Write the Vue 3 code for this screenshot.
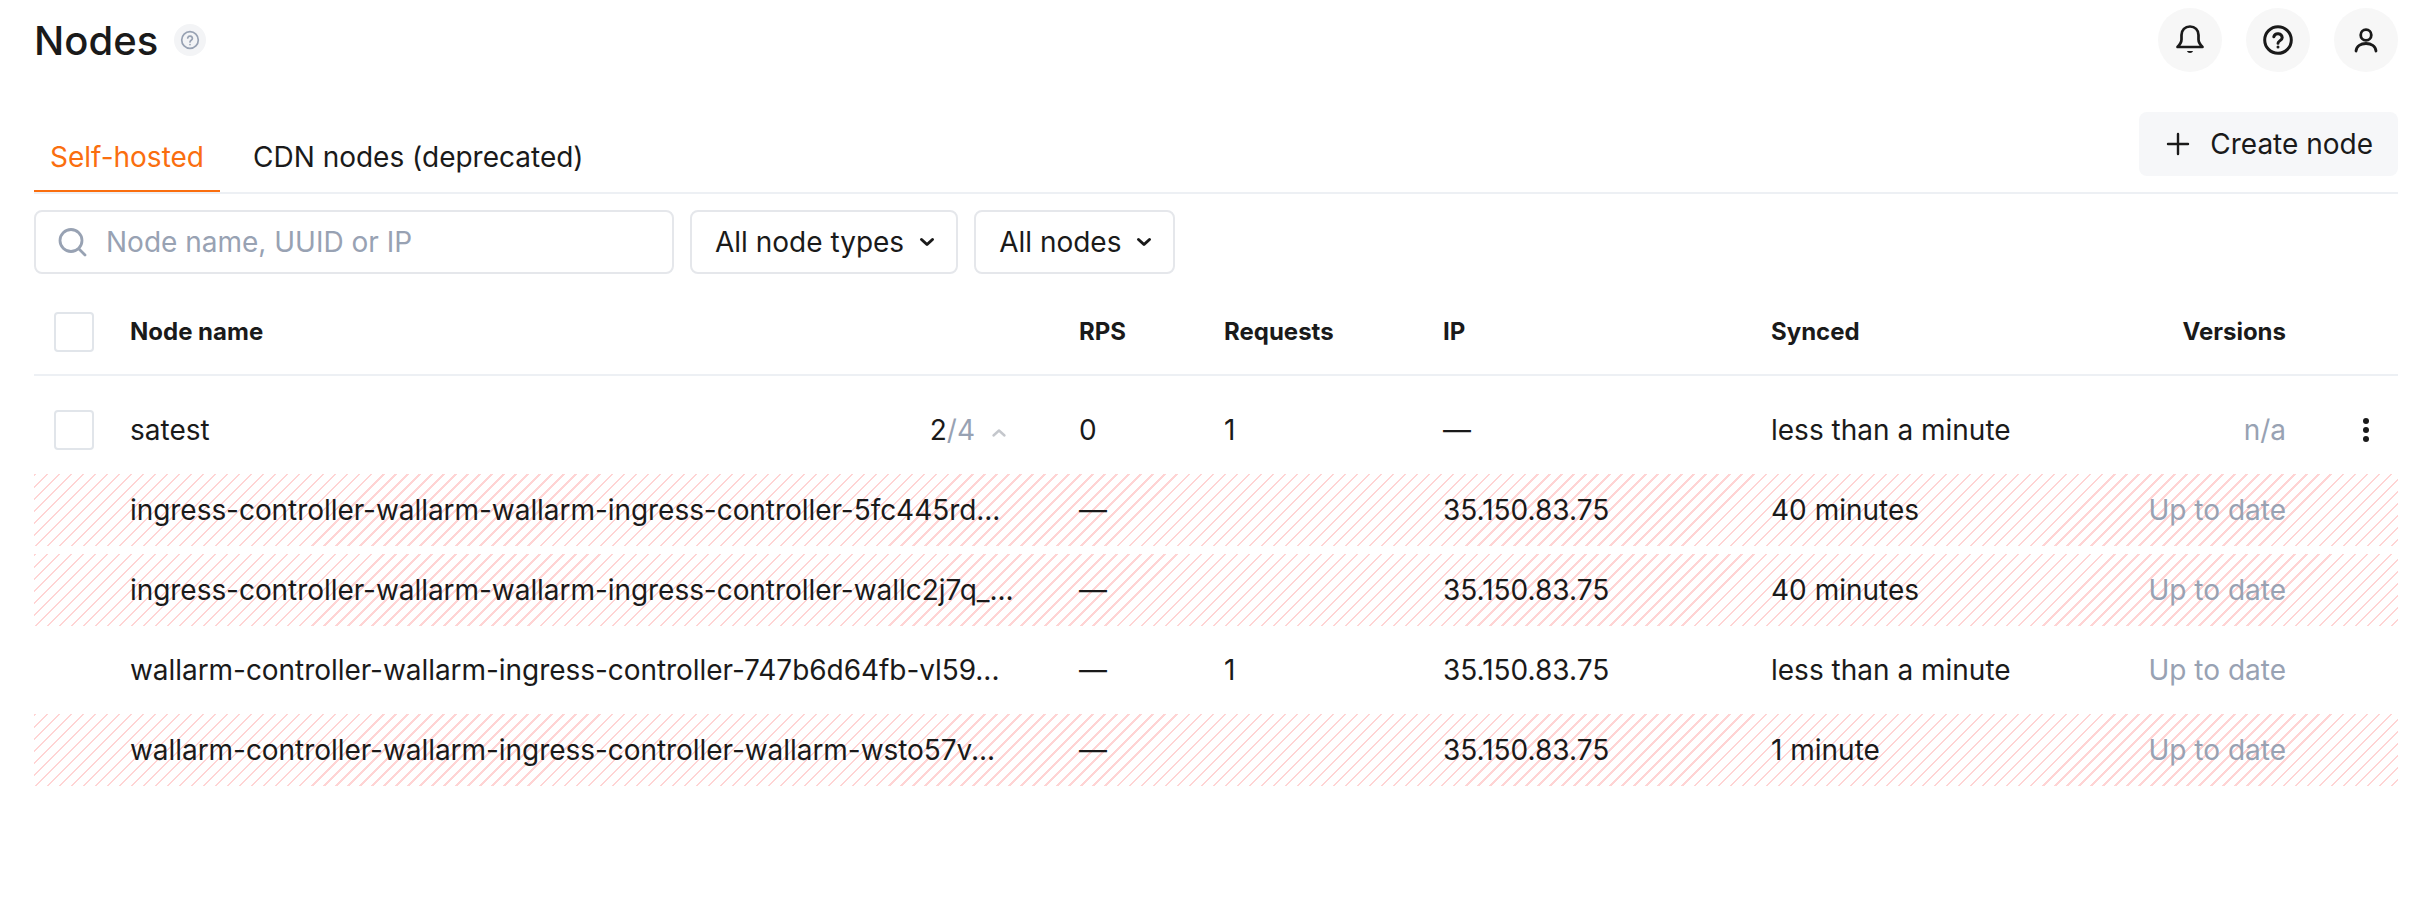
<template>
  <div class="page">
    <header class="top">
      <div class="title">
        <h1>Nodes</h1>
        <span class="hint">
          <svg width="20" height="20" viewBox="0 0 20 20" fill="none" stroke="#98a2b3" stroke-width="1.7" stroke-linecap="round">
            <circle cx="10" cy="10" r="8.3" />
            <path d="M7.700 7.900a2.400 2.400 0 0 1 4.700.6c0 1.600-2.400 1.800-2.400 3.400" />
            <path d="M10 14.500v.1" />
          </svg>
        </span>
      </div>
      <div class="top-icons">
        <button class="round">
          <svg width="32" height="32" viewBox="0 0 32 32" fill="none" stroke="#1a1a1a" stroke-width="2.700" stroke-linecap="round" stroke-linejoin="round">
            <path d="M3.500 23h25c-2.500-2.500-4-4-4-7.500v-4.500C24.500 6 21 2.500 16 2.500S7.500 6 7.500 11v4.500c0 3.500-1.500 5-4 7.500z" />
            <path d="M13 27h6c-.5 2.500-5.500 2.500-6 0z" fill="#1a1a1a" stroke="none" />
          </svg>
        </button>
        <button class="round">
          <svg width="32" height="32" viewBox="0 0 32 32" fill="none" stroke="#1a1a1a" stroke-width="3" stroke-linecap="round">
            <circle cx="16" cy="16" r="13.300" />
            <path d="M11.800 12.700a4.300 4.300 0 0 1 8.400 1c0 2.800-4.200 3-4.200 5.600" />
            <path d="M16 23v.1" />
          </svg>
        </button>
        <button class="round">
          <svg width="32" height="32" viewBox="0 0 32 32" fill="none" stroke="#1a1a1a" stroke-width="2.800" stroke-linecap="round">
            <circle cx="16" cy="11" r="5.300" />
            <path d="M6 27c.6-5 4.800-7.500 10-7.500S25.400 22 26 27" />
          </svg>
        </button>
      </div>
    </header>

    <div class="tabs-row">
      <nav class="tabs">
        <a class="tab active">Self-hosted</a>
        <a class="tab">CDN nodes (deprecated)</a>
      </nav>
      <button class="create">
        <svg width="24" height="24" viewBox="0 0 24 24" fill="none" stroke="#1a1a1a" stroke-width="2.400" stroke-linecap="round">
          <path d="M12 2v20M2 12h20" />
        </svg>
        Create node
      </button>
    </div>

    <div class="filters">
      <div class="search">
        <svg width="32" height="32" viewBox="0 0 32 32" fill="none" stroke="#98a2b3" stroke-width="2.800" stroke-linecap="round">
          <circle cx="15" cy="14.500" r="11" />
          <path d="M23 23l6 6" />
        </svg>
        <span>Node name, UUID or IP</span>
      </div>
      <button class="select">
        All node types
        <svg width="16" height="10" viewBox="0 0 16 10" fill="none" stroke="#1a1a1a" stroke-width="3" stroke-linecap="round" stroke-linejoin="round">
          <path d="M2.500 2.500L8 7.500l5.500-5" />
        </svg>
      </button>
      <button class="select">
        All nodes
        <svg width="16" height="10" viewBox="0 0 16 10" fill="none" stroke="#1a1a1a" stroke-width="3" stroke-linecap="round" stroke-linejoin="round">
          <path d="M2.500 2.500L8 7.500l5.500-5" />
        </svg>
      </button>
    </div>

    <div class="row head">
      <div class="c-check"><span class="box"></span></div>
      <div class="c-name">Node name</div>
      <div class="c-rps">RPS</div>
      <div class="c-req">Requests</div>
      <div class="c-ip">IP</div>
      <div class="c-sync">Synced</div>
      <div class="c-ver">Versions</div>
      <div class="c-menu"></div>
    </div>

    <div class="row parent">
      <div class="c-check"><span class="box"></span></div>
      <div class="c-name split">
        <span>satest</span>
        <span class="count">2<em>/4</em>
          <svg width="16" height="10" viewBox="0 0 16 10" fill="none" stroke="#c4c7cc" stroke-width="2.400" stroke-linecap="round" stroke-linejoin="round">
            <path d="M2.500 7.500L8 2.500l5.500 5" />
          </svg>
        </span>
      </div>
      <div class="c-rps">0</div>
      <div class="c-req">1</div>
      <div class="c-ip">—</div>
      <div class="c-sync">less than a minute</div>
      <div class="c-ver muted">n/a</div>
      <div class="c-menu">
        <svg width="8" height="26" viewBox="0 0 8 26" fill="#1a1a1a">
          <circle cx="4" cy="4" r="3" />
          <circle cx="4" cy="13" r="3" />
          <circle cx="4" cy="22" r="3" />
        </svg>
      </div>
    </div>

    <div v-for="n in nodes" :key="n.name" class="row child" :class="{ stale: n.stale }">
      <div class="c-check"></div>
      <div class="c-name">{{ n.name }}</div>
      <div class="c-rps">—</div>
      <div class="c-req">{{ n.requests }}</div>
      <div class="c-ip">35.150.83.75</div>
      <div class="c-sync">{{ n.synced }}</div>
      <div class="c-ver muted">Up to date</div>
      <div class="c-menu"></div>
    </div>
  </div>
</template>

<script setup>
const nodes = [
  { name: "ingress-controller-wallarm-wallarm-ingress-controller-5fc445rd...", requests: "", synced: "40 minutes", stale: true },
  { name: "ingress-controller-wallarm-wallarm-ingress-controller-wallc2j7q_...", requests: "", synced: "40 minutes", stale: true },
  { name: "wallarm-controller-wallarm-ingress-controller-747b6d64fb-vl59...", requests: "1", synced: "less than a minute", stale: false },
  { name: "wallarm-controller-wallarm-ingress-controller-wallarm-wsto57v...", requests: "", synced: "1 minute", stale: true }
]
</script>

<style>
body {
  background: #fff;
}
</style>

<style scoped>
.page {
  padding: 0 22px 0 34px;
  font-family: Inter, "Liberation Sans", sans-serif;
  font-size: 28px;
  color: #1a1a1a;
}

.top {
  height: 80px;
  display: flex;
  justify-content: space-between;
  align-items: center;
}

.title {
  display: flex;
  align-items: center;
  gap: 16px;
}

.title h1 {
  margin: 0;
  font-size: 40px;
  font-weight: 500;
}

.hint {
  width: 32px;
  height: 32px;
  border-radius: 50%;
  background: #f3f4f6;
  display: flex;
  align-items: center;
  justify-content: center;
}

.top-icons {
  display: flex;
  gap: 24px;
}

.round {
  width: 64px;
  height: 64px;
  border: none;
  border-radius: 50%;
  background: #f7f7f7;
  padding: 0;
  display: flex;
  align-items: center;
  justify-content: center;
}

.tabs-row {
  height: 114px;
  padding-top: 32px;
  box-sizing: border-box;
  display: flex;
  justify-content: space-between;
  border-bottom: 2px solid #edf0f4;
}

.tabs {
  display: flex;
  gap: 17px;
  align-items: flex-end;
}

.tab {
  height: 80px;
  padding: 11px 16px 0;
  display: flex;
  align-items: center;
  box-sizing: border-box;
  border-bottom: 2px solid transparent;
}

.tab.active {
  color: #fa6e0f;
  border-bottom-color: #fa6e0f;
}

.create {
  height: 64px;
  padding: 0 25px 0 27px;
  border: none;
  border-radius: 8px;
  background: #f6f7f9;
  display: flex;
  align-items: center;
  gap: 20px;
  font: inherit;
  color: inherit;
}

.filters {
  display: flex;
  gap: 16px;
  margin-top: 16px;
}

.search {
  width: 640px;
  height: 64px;
  box-sizing: border-box;
  padding: 0 20px;
  border: 2px solid #e5e7eb;
  border-radius: 8px;
  display: flex;
  align-items: center;
  gap: 18px;
  color: #98a2b3;
}

.select {
  height: 64px;
  padding: 0 21px 0 23px;
  border: 2px solid #e5e7eb;
  border-radius: 8px;
  background: #fff;
  display: flex;
  align-items: center;
  gap: 15px;
  font: inherit;
  color: inherit;
}

.row {
  display: flex;
  align-items: center;
}

.head {
  height: 85px;
  padding-top: 1px;
  margin-top: 14px;
  font-weight: 700;
  font-size: 24px;
  border-bottom: 2px solid #edf0f4;
}

.parent {
  height: 88px;
  padding-top: 10px;
}

.child {
  height: 72px;
  margin-bottom: 8px;
}

.child .c-name {
  letter-spacing: -0.05px;
}

.stale {
  background: repeating-linear-gradient(135deg, #ffd4d4 0 1.7px, #fff 1.7px 8.5px);
}

.c-check {
  width: 96px;
  padding-left: 20px;
  box-sizing: border-box;
  flex: none;
}

.box {
  display: block;
  width: 40px;
  height: 40px;
  box-sizing: border-box;
  border: 2px solid #e1e5ea;
  border-radius: 4px;
}

.c-name {
  width: 949px;
  flex: none;
  white-space: nowrap;
}

.split {
  display: flex;
  justify-content: space-between;
  padding-right: 72px;
  box-sizing: border-box;
}

.count em {
  font-style: normal;
  color: #98a2b3;
}

.count svg {
  margin-left: 16px;
  vertical-align: 2px;
}

.c-rps {
  width: 145px;
  flex: none;
}

.c-req {
  width: 219px;
  flex: none;
}

.c-ip {
  width: 328px;
  flex: none;
}

.c-sync {
  width: 300px;
  flex: none;
}

.c-ver {
  width: 215px;
  flex: none;
  text-align: right;
}

.c-menu {
  flex: 1;
  display: flex;
  justify-content: flex-end;
  padding-right: 28px;
}

.muted {
  color: #98a2b3;
}
</style>
